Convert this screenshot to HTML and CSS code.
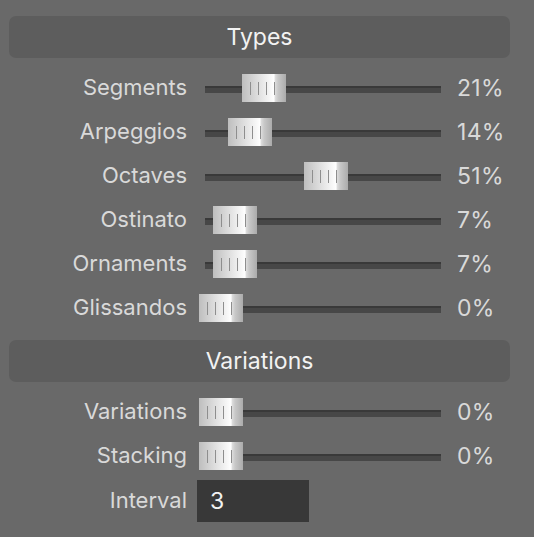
FILE: index.html
```html
<!DOCTYPE html>
<html>
<head>
<meta charset="utf-8">
<link rel="stylesheet" href="styles.css">
</head>
<body>
<div class="panel">
  <div class="section-header">Types</div>
  <div class="rows first">
    <div class="row"><span class="label">Segments</span><div class="slider"><div class="track"></div><div class="thumb" style="--p:21"><i></i><i></i><i></i><i></i></div></div><span class="value">21%</span></div>
    <div class="row"><span class="label">Arpeggios</span><div class="slider"><div class="track"></div><div class="thumb" style="--p:14"><i></i><i></i><i></i><i></i></div></div><span class="value">14%</span></div>
    <div class="row"><span class="label">Octaves</span><div class="slider"><div class="track"></div><div class="thumb" style="--p:51"><i></i><i></i><i></i><i></i></div></div><span class="value">51%</span></div>
    <div class="row"><span class="label">Ostinato</span><div class="slider"><div class="track"></div><div class="thumb" style="--p:7"><i></i><i></i><i></i><i></i></div></div><span class="value">7%</span></div>
    <div class="row"><span class="label">Ornaments</span><div class="slider"><div class="track"></div><div class="thumb" style="--p:7"><i></i><i></i><i></i><i></i></div></div><span class="value">7%</span></div>
    <div class="row"><span class="label">Glissandos</span><div class="slider"><div class="track"></div><div class="thumb" style="--p:0"><i></i><i></i><i></i><i></i></div></div><span class="value">0%</span></div>
  </div>
  <div class="section-header second">Variations</div>
  <div class="rows first">
    <div class="row"><span class="label">Variations</span><div class="slider"><div class="track"></div><div class="thumb" style="--p:0"><i></i><i></i><i></i><i></i></div></div><span class="value">0%</span></div>
    <div class="row"><span class="label">Stacking</span><div class="slider"><div class="track"></div><div class="thumb" style="--p:0"><i></i><i></i><i></i><i></i></div></div><span class="value">0%</span></div>
    <div class="row interval-row"><span class="label">Interval</span><div class="input">3</div></div>
  </div>
</div>
</body>
</html>
```
FILE: styles.css
```css
html, body {
  margin: 0;
  padding: 0;
  background: #696969;
  width: 534px;
  height: 537px;
  overflow: hidden;
  font-family: Inter, "Liberation Sans", sans-serif;
}
.panel {
  padding: 16px 24px 0 9px;
}
.section-header {
  height: 42px;
  border-radius: 7px;
  background: #5d5d5d;
  color: #f2f2f2;
  font-size: 23px;
  display: flex;
  align-items: center;
  justify-content: center;
}
.section-header.second {
  margin-top: 10px;
}
.rows.first {
  margin-top: 8px;
  margin-left: -9px;
}
.row {
  display: flex;
  align-items: center;
  height: 44px;
}
.label {
  width: 187px;
  text-align: right;
  color: #d9d9d9;
  font-size: 22px;
  position: relative;
  top: -1px;
}
.slider {
  position: relative;
  width: 249px;
  height: 44px;
  margin-left: 12px;
  display: flex;
  align-items: center;
}
.track {
  height: 7px;
  margin: 3px 7px 0 6px;
  flex: 1;
  background: linear-gradient(#393939 0, #393939 2px, #474747 2px);
}
.thumb {
  position: absolute;
  top: 8px;
  left: calc(var(--p) * 2.05px);
  width: 44px;
  height: 28px;
  background: linear-gradient(to right, #bebebe 0%, #e6e6e6 45%, #fafafa 68%, #ffffff 73%, #dedede 75%, #c8c8c8 82%, #b8b8b8 92%, #ababab 100%);
  display: flex;
  gap: 7px;
  padding: 8px 0 0 8px;
  box-sizing: border-box;
}
.thumb i {
  display: block;
  width: 1px;
  height: 13px;
  background: #8e8e8e;
}
.value {
  margin-left: 9px;
  color: #d9d9d9;
  font-size: 23px;
  letter-spacing: 0.3px;
}
.interval-row {
  height: 42px;
  margin-top: 2px;
}
.input {
  margin-left: 10px;
  width: 112px;
  height: 42px;
  background: #383838;
  color: #f2f2f2;
  font-size: 23px;
  display: flex;
  align-items: center;
  padding-left: 13px;
  box-sizing: border-box;
}
```
